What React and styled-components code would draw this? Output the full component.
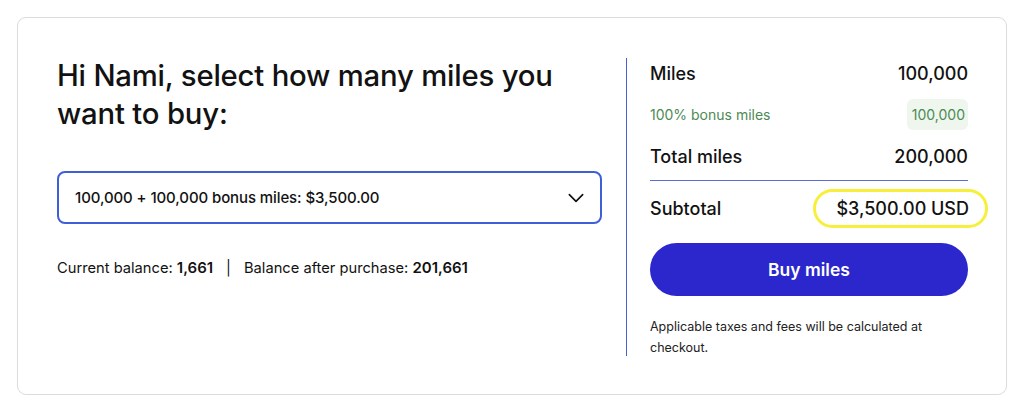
import React from 'react';
import styled, { createGlobalStyle } from 'styled-components';

const GlobalStyle = createGlobalStyle`
  html, body {
    margin: 0;
    padding: 0;
    background: #fff;
  }
  body {
    font-family: Inter, 'Noto Sans', Arial, sans-serif;
    color: #121212;
  }
`;

const Page = styled.div`
  padding: 17px 17px 13px 17px;
`;

const Card = styled.div`
  box-sizing: border-box;
  width: 990px;
  height: 378px;
  border: 1.5px solid #dcdcdc;
  border-radius: 9px;
  display: grid;
  grid-template-columns: 569px 1fr;
  padding: 39px 0 0 39px;
`;

const Left = styled.div`
  padding-right: 24px;
`;

const Title = styled.h1`
  margin: 0;
  font-size: 29.3px;
  line-height: 38px;
  font-weight: 500;
  letter-spacing: -0.2px;
  width: 525px;
`;

const Select = styled.div`
  margin-top: 38px;
  box-sizing: border-box;
  height: 53px;
  border: 2px solid #3f5fd6;
  border-radius: 8px;
  display: flex;
  align-items: center;
  justify-content: space-between;
  padding: 0 14px 0 16px;
  font-size: 15px;
  font-weight: 500;
  letter-spacing: -0.1px;
`;

const Balance = styled.p`
  margin: 34px 0 0;
  font-size: 14.7px;
  b {
    font-weight: 600;
    font-size: 15px;
  }
`;

const Sep = styled.span`
  margin: 0 13px;
`;

const Right = styled.div`
  border-left: 1px solid #4a5fd0;
  margin-top: 1px;
  height: 298px;
  padding-left: 23px;
  width: 318px;
`;

const Row = styled.div`
  display: flex;
  justify-content: space-between;
  align-items: center;
  height: ${(p) => p.h || 40}px;
  font-size: ${(p) => (p.small ? '14px' : '18px')};
  font-weight: ${(p) => (p.small ? 400 : 500)};
  color: ${(p) => (p.small ? '#4d8a55' : '#121212')};
`;

const Bonus = styled.span`
  background: #eef6ee;
  border-radius: 6px;
  padding: 7px 3px 7px 5px;
`;

const Line = styled.div`
  height: 1px;
  background: #5a6ecf;
  margin-top: 8px;
`;

const Highlight = styled.span`
  border: 3px solid #f6f03c;
  border-radius: 20px;
  padding: 6px 16px 6px 20px;
  margin-right: -20px;
`;

const Button = styled.button`
  display: block;
  width: 100%;
  height: 53px;
  margin-top: 8px;
  border: none;
  border-radius: 27px;
  background: #2b27cd;
  color: #fff;
  font-family: inherit;
  font-size: 17.5px;
  font-weight: 600;
`;

const Note = styled.p`
  margin: 20px 0 0;
  font-size: 12.5px;
  line-height: 21px;
  color: #222;
  width: 300px;
`;

export default function App() {
  return (
    <Page>
      <GlobalStyle />
      <Card>
        <Left>
          <Title>Hi Nami, select how many miles you want to buy:</Title>
          <Select>
            <span>100,000 + 100,000 bonus miles: $3,500.00</span>
            <svg width="20" height="20" viewBox="0 0 24 24" fill="none" stroke="#121212" strokeWidth="2" strokeLinecap="round" strokeLinejoin="round">
              <path d="M4 8l8 8 8-8" />
            </svg>
          </Select>
          <Balance>
            Current balance: <b>1,661</b>
            <Sep>|</Sep>
            Balance after purchase: <b>201,661</b>
          </Balance>
        </Left>
        <Right>
          <Row h={30}>
            <span>Miles</span>
            <span>100,000</span>
          </Row>
          <Row small h={52}>
            <span>100% bonus miles</span>
            <Bonus>100,000</Bonus>
          </Row>
          <Row h={32}>
            <span>Total miles</span>
            <span>200,000</span>
          </Row>
          <Line />
          <Row h={54}>
            <span>Subtotal</span>
            <Highlight>$3,500.00 USD</Highlight>
          </Row>
          <Button>Buy miles</Button>
          <Note>Applicable taxes and fees will be calculated at checkout.</Note>
        </Right>
      </Card>
    </Page>
  );
}
